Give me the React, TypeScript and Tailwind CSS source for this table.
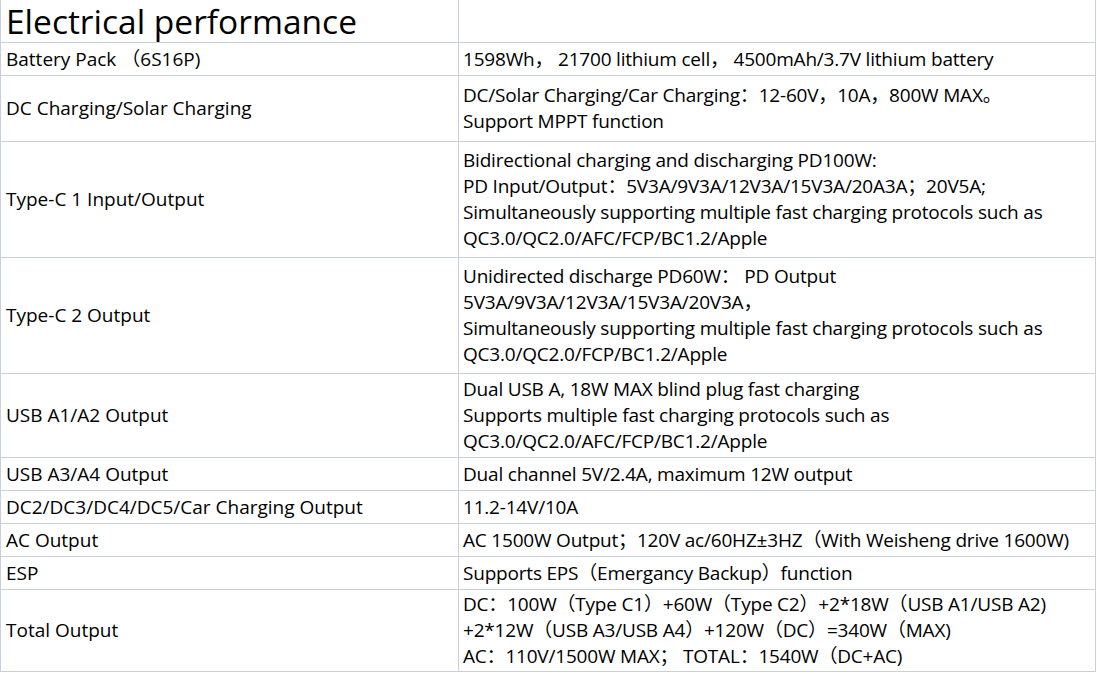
type Row = { label: string; lines: string[]; h: string };

const rows: Row[] = [
  { label: "Battery Pack （6S16P)", lines: ["1598Wh， 21700 lithium cell， 4500mAh/3.7V lithium battery"], h: "h-[33px]" },
  {
    label: "DC Charging/Solar Charging",
    lines: ["DC/Solar Charging/Car Charging：12-60V，10A，800W MAX。", "Support MPPT function"],
    h: "h-[66px]",
  },
  {
    label: "Type-C 1 Input/Output",
    lines: [
      "Bidirectional charging and discharging PD100W:",
      "PD Input/Output：5V3A/9V3A/12V3A/15V3A/20A3A；20V5A;",
      "Simultaneously supporting multiple fast charging protocols such as",
      "QC3.0/QC2.0/AFC/FCP/BC1.2/Apple",
    ],
    h: "h-[116px]",
  },
  {
    label: "Type-C 2 Output",
    lines: [
      "Unidirected discharge PD60W： PD Output",
      "5V3A/9V3A/12V3A/15V3A/20V3A，",
      "Simultaneously supporting multiple fast charging protocols such as",
      "QC3.0/QC2.0/FCP/BC1.2/Apple",
    ],
    h: "h-[116px]",
  },
  {
    label: "USB A1/A2 Output",
    lines: [
      "Dual USB A, 18W MAX blind plug fast charging",
      "Supports multiple fast charging protocols such as",
      "QC3.0/QC2.0/AFC/FCP/BC1.2/Apple",
    ],
    h: "h-[84px]",
  },
  { label: "USB A3/A4 Output", lines: ["Dual channel 5V/2.4A, maximum 12W output"], h: "h-[33px]" },
  { label: "DC2/DC3/DC4/DC5/Car Charging Output", lines: ["11.2-14V/10A"], h: "h-[33px]" },
  { label: "AC Output", lines: ["AC 1500W Output；120V ac/60HZ±3HZ（With Weisheng drive 1600W)"], h: "h-[33px]" },
  { label: "ESP", lines: ["Supports EPS（Emergancy Backup）function"], h: "h-[33px]" },
  {
    label: "Total Output",
    lines: [
      "DC：100W（Type C1）+60W（Type C2）+2*18W（USB A1/USB A2)",
      "+2*12W（USB A3/USB A4）+120W（DC）=340W（MAX)",
      "AC：110V/1500W MAX； TOTAL：1540W（DC+AC)",
    ],
    h: "h-[82px]",
  },
];

export default function App() {
  return (
    <div className="w-[1097px] h-[674px] overflow-hidden bg-white text-black font-['Open_Sans','Noto_Sans_CJK_SC',sans-serif]">
      <table className="border-collapse w-[1096px] table-fixed">
        <colgroup>
          <col className="w-[458px]" />
          <col />
        </colgroup>
        <tbody>
          <tr className="h-[42px]">
            <td className="border border-[#c8cfdc] border-t-0 px-[5px] text-[33.5px] leading-[40px] align-middle">
              Electrical performance
            </td>
            <td className="border border-[#c8cfdc] border-t-0" />
          </tr>
          {rows.map((r) => (
            <tr key={r.label} className={r.h}>
              <td className="border border-[#c8cfdc] px-[5px] text-[19px] leading-[26px] align-middle whitespace-nowrap">
                {r.label}
              </td>
              <td className="border border-[#c8cfdc] px-[4px] text-[19px] tracking-[-0.2px] leading-[26px] align-middle whitespace-nowrap">
                {r.lines.map((l, i) => (
                  <div key={i}>{l}</div>
                ))}
              </td>
            </tr>
          ))}
        </tbody>
      </table>
    </div>
  );
}
